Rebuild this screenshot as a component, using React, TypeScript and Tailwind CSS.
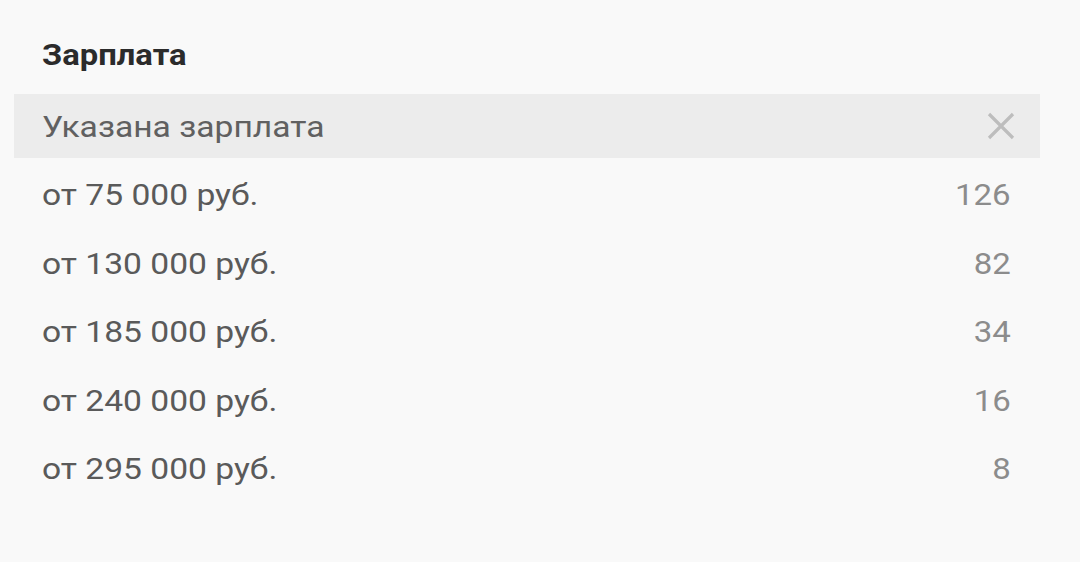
const rows = [
  { label: "от 75 000 руб.", count: "126" },
  { label: "от 130 000 руб.", count: "82" },
  { label: "от 185 000 руб.", count: "34" },
  { label: "от 240 000 руб.", count: "16" },
  { label: "от 295 000 руб.", count: "8" },
]

const App = () => {
  return (
    <div className="h-[562px] w-[1080px] bg-[#f9f9f9] font-['Roboto',sans-serif]">
      <div className="px-[42px] pt-[35px]">
        <h2 className="inline-block origin-left scale-x-[1.13] text-[29px] leading-[40px] font-bold text-[#2b2b2b]">Зарплата</h2>
      </div>

      <div className="mt-[19px] ml-[14px] flex w-[1026px] flex-col gap-[4.6px]">
        <div className="flex h-16 items-center justify-between bg-[#ececec] pl-[28px] pr-[25px]">
          <span className="inline-block origin-left scale-x-[1.12] text-[30px] text-[#606060]">Указана зарплата</span>
          <svg width="28" height="28" viewBox="0 0 28 28" className="text-[#bdbdbd]">
            <path d="M2 2 L26 26 M26 2 L2 26" stroke="currentColor" strokeWidth="3.2" fill="none" />
          </svg>
        </div>
        {rows.map((r) => (
          <div key={r.count} className="flex h-16 items-center justify-between pl-[28px] pr-[29px]">
            <span className="inline-block origin-left scale-x-[1.12] text-[30px] text-[#5a5a5a]">{r.label}</span>
            <span className="inline-block origin-right scale-x-[1.1] text-[30px] text-[#8c8c8c]">{r.count}</span>
          </div>
        ))}
      </div>
    </div>
  )
}

export default App
